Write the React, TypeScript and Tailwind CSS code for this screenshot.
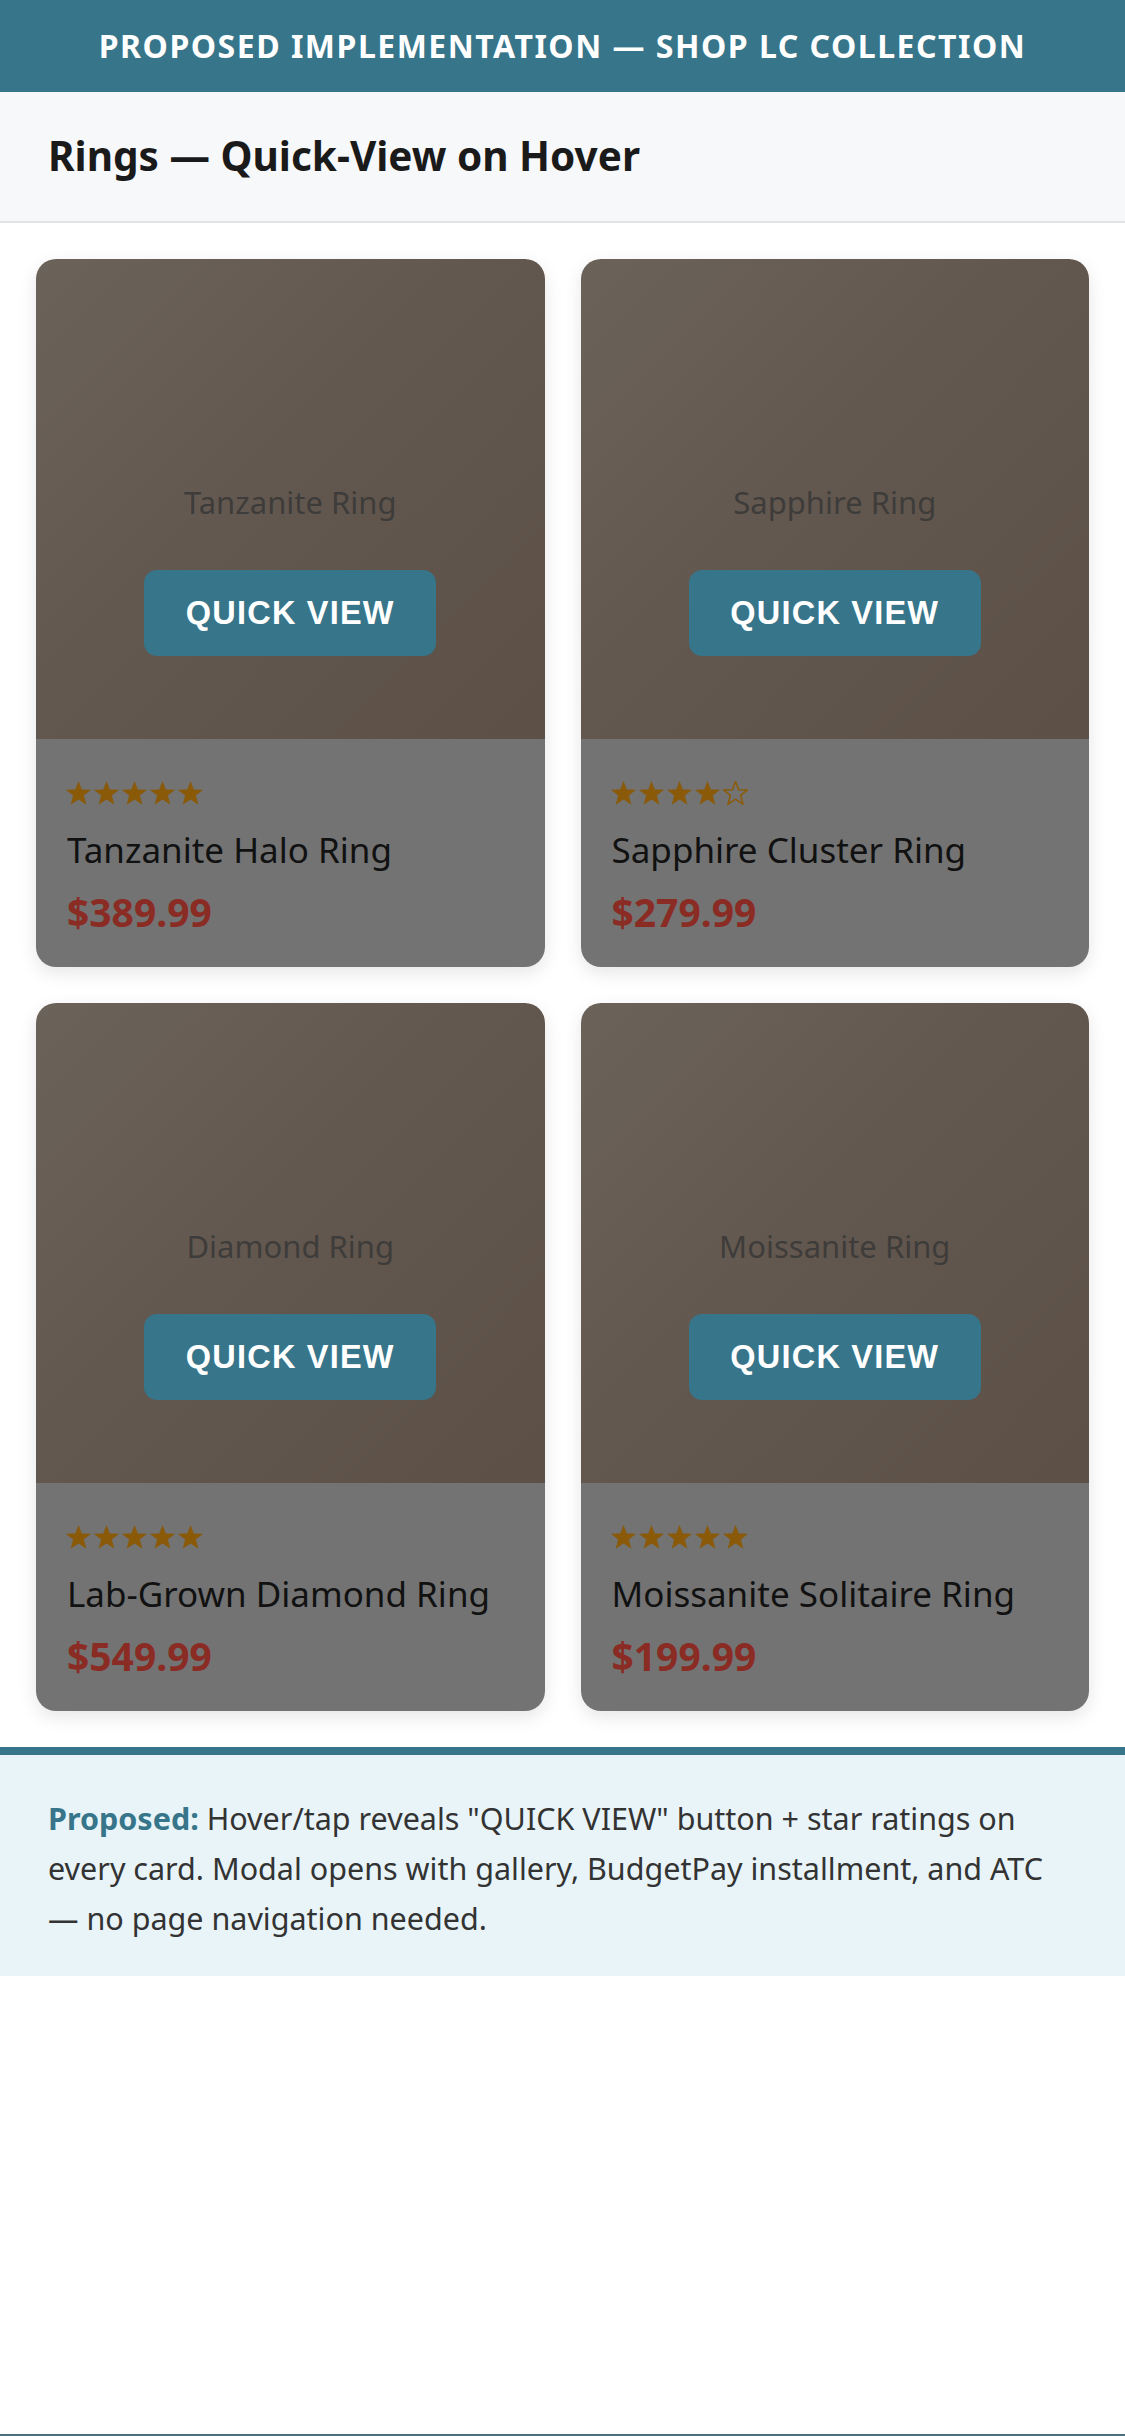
import React from "react";

type Product = {
  label: string;
  name: string;
  price: string;
  rating: number;
};

const products: Product[] = [
  { label: "Tanzanite Ring", name: "Tanzanite Halo Ring", price: "$389.99", rating: 5 },
  { label: "Sapphire Ring", name: "Sapphire Cluster Ring", price: "$279.99", rating: 4 },
  { label: "Diamond Ring", name: "Lab-Grown Diamond Ring", price: "$549.99", rating: 5 },
  { label: "Moissanite Ring", name: "Moissanite Solitaire Ring", price: "$199.99", rating: 5 },
];

const STAR = "12,0.5 15,8.3 23.5,8.6 16.9,13.9 19.2,22.2 12,17.4 4.8,22.2 7.1,13.9 0.5,8.6 9,8.3";

function Star({ filled }: { filled: boolean }) {
  return (
    <svg width="25" height="24" viewBox="0 0 24 23" className="shrink-0">
      <polygon
        points={STAR}
        fill={filled ? "#8b5a08" : "none"}
        stroke="#8b5a08"
        strokeWidth={filled ? 0.4 : 1.5}
        strokeLinejoin="miter"
      />
    </svg>
  );
}

function Card({ p }: { p: Product }) {
  return (
    <div className="h-[708px] rounded-[20px] overflow-hidden flex flex-col shadow-[0_6px_18px_rgba(0,0,0,0.10)]">
      <div className="relative h-[480px] bg-[linear-gradient(135deg,#6b6259_0%,#62574e_50%,#5c5047_100%)] flex items-center justify-center">
        <span className="text-[31px] text-[#3e3c3a] font-['Noto_Sans',sans-serif] mt-[6px]">{p.label}</span>
        <button className="absolute left-1/2 -translate-x-1/2 top-[311px] w-[292px] h-[86px] rounded-[13px] bg-[#37758a] text-white font-bold text-[32.5px] tracking-[1.2px] font-['Liberation_Sans',Arial,sans-serif]">
          QUICK VIEW
        </button>
      </div>
      <div className="flex-1 bg-[#737373] px-[31px] pt-[42px] flex flex-col">
        <div className="flex gap-[3px] h-[24px] -ml-[1px]">
          {[0, 1, 2, 3, 4].map((i) => (
            <Star key={i} filled={i < p.rating} />
          ))}
        </div>
        <div className="mt-[23px] text-[35px] leading-[44px] text-[#111111] font-['Noto_Sans',sans-serif]">
          {p.name}
        </div>
        <div className="mt-[16px] text-[39px] leading-[48px] font-bold text-[#8a2b24] font-['Noto_Sans',sans-serif]">
          {p.price}
        </div>
      </div>
    </div>
  );
}

export default function App() {
  return (
    <div className="min-h-screen bg-white border-b-2 border-[#4b6f7c] font-['Noto_Sans',sans-serif]">
      <header className="h-[92px] bg-[#37758a] flex items-center justify-center">
        <h1 className="text-white font-bold text-[32px] tracking-[1.5px] uppercase">
          Proposed Implementation — Shop LC Collection
        </h1>
      </header>
      <div className="h-[131px] bg-[#f7f8fa] border-b-2 border-[#e2e2e2] px-[48px] flex items-center">
        <h2 className="text-[40.5px] font-bold text-[#1a1a1a]">Rings — Quick-View on Hover</h2>
      </div>
      <div className="grid grid-cols-2 gap-[36px] p-[36px]">
        {products.map((p) => (
          <Card key={p.name} p={p} />
        ))}
      </div>
      <div className="border-t-8 border-[#37758a] bg-[#e8f4f8] pl-[48px] pr-[58px] pt-[38px] pb-[33px]">
        <p className="text-[30.5px] leading-[50px] text-[#333333]">
          <strong className="text-[#37758a] font-bold">Proposed:</strong> Hover/tap reveals "QUICK VIEW" button + star ratings on every card. Modal opens with gallery, BudgetPay installment, and ATC — no page navigation needed.
        </p>
      </div>
    </div>
  );
}
